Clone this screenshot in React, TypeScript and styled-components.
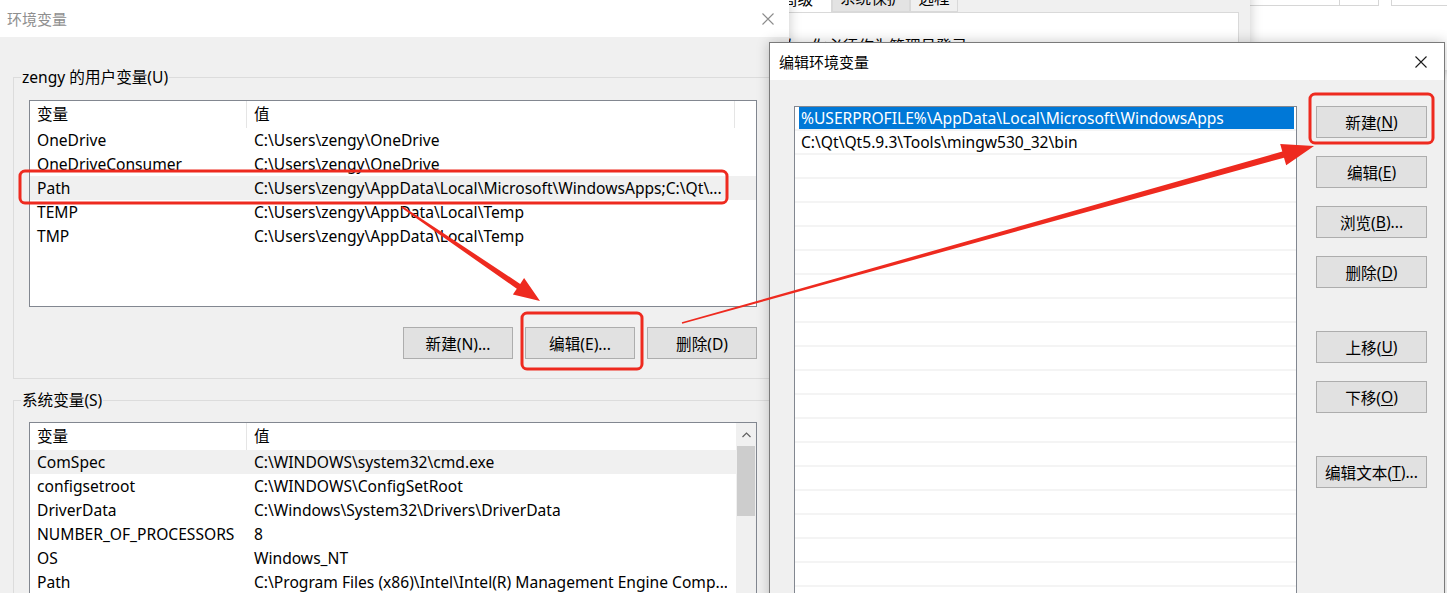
import React from 'react'
import styled, { createGlobalStyle } from 'styled-components'

const GlobalStyle = createGlobalStyle`
  html, body {
    margin: 0;
    padding: 0;
  }
  body {
    font-family: "Segoe UI", "Noto Sans", "Noto Sans CJK SC", sans-serif;
    font-size: 15.6px;
    color: #000;
    background: #fff;
    overflow: hidden;
  }
  * {
    box-sizing: border-box;
  }
`

const userVars = [
  ['OneDrive', 'C:\\Users\\zengy\\OneDrive'],
  ['OneDriveConsumer', 'C:\\Users\\zengy\\OneDrive'],
  ['Path', 'C:\\Users\\zengy\\AppData\\Local\\Microsoft\\WindowsApps;C:\\Qt\\...'],
  ['TEMP', 'C:\\Users\\zengy\\AppData\\Local\\Temp'],
  ['TMP', 'C:\\Users\\zengy\\AppData\\Local\\Temp'],
]

const sysVars = [
  ['ComSpec', 'C:\\WINDOWS\\system32\\cmd.exe'],
  ['configsetroot', 'C:\\WINDOWS\\ConfigSetRoot'],
  ['DriverData', 'C:\\Windows\\System32\\Drivers\\DriverData'],
  ['NUMBER_OF_PROCESSORS', '8'],
  ['OS', 'Windows_NT'],
  ['Path', 'C:\\Program Files (x86)\\Intel\\Intel(R) Management Engine Comp...'],
]

const pathEntries = [
  '%USERPROFILE%\\AppData\\Local\\Microsoft\\WindowsApps',
  'C:\\Qt\\Qt5.9.3\\Tools\\mingw530_32\\bin',
]

// thick tapered arrow, from (x1,y1) to tip (x2,y2)
const arrowPoints = (x1: number, y1: number, x2: number, y2: number, head: number, wing: number, w0: number, w1: number) => {
  const len = Math.hypot(x2 - x1, y2 - y1)
  const ux = (x2 - x1) / len
  const uy = (y2 - y1) / len
  const nx = -uy
  const ny = ux
  const bx = x2 - ux * head
  const by = y2 - uy * head
  const pts = [
    [x1 + nx * w0, y1 + ny * w0],
    [bx + nx * w1, by + ny * w1],
    [bx + nx * wing, by + ny * wing],
    [x2, y2],
    [bx - nx * wing, by - ny * wing],
    [bx - nx * w1, by - ny * w1],
    [x1 - nx * w0, y1 - ny * w0],
  ]
  return pts.map(p => p.map(v => v.toFixed(1)).join(',')).join(' ')
}

const CloseIcon = ({ color }: { color: string }) => (
  <svg width="12" height="12" viewBox="0 0 12 12">
    <path d="M0.5 0.5 L11.5 11.5 M11.5 0.5 L0.5 11.5" stroke={color} strokeWidth="1.1" fill="none" />
  </svg>
)

export default function App() {
  return (
    <>
      <GlobalStyle />
      <Desktop>
        <Window $left={1250} $top={-30} $width={260} $height={100} $z={1}>
          <TopCells>
            <TopCell $width={90} />
            <TopCell $width={39} />
            <TopGap />
            <TopCell $width={70} />
          </TopCells>
        </Window>

        <Window $left={560} $top={-12} $width={690} $height={300} $z={2} $bg="#f0f0f0">
          <Tabs>
            <Tab $active>高级</Tab>
            <Tab $shade="#e3e3e3">系统保护</Tab>
            <Tab $shade="#f0f0f0">远程</Tab>
          </Tabs>
          <TabPanel>要进行大多数更改，你必须作为管理员登录。</TabPanel>
        </Window>

        <Window $left={0} $top={0} $width={789} $height={640} $z={3} $bg="#f0f0f0">
          <TitleBar $height={37} $pad={7}>
            <TitleText $dim>环境变量</TitleText>
            <CloseBox $width={42}>
              <CloseIcon color="#8c8c8c" />
            </CloseBox>
          </TitleBar>
          <EnvBody>
            <Group $top={30}>
              <GroupLabel>zengy 的用户变量(U)</GroupLabel>
              <ListBox $height={207} $top={13}>
                <Table>
                  <HeaderRow>
                    <HeaderCell $width={217}>变量</HeaderCell>
                    <HeaderCell $width={488}>值</HeaderCell>
                    <HeaderCell $width={0} $last />
                  </HeaderRow>
                  {userVars.map(([k, v]) => (
                    <VarRow key={k} $selected={k === 'Path'}>
                      <VarCell $width={217}>{k}</VarCell>
                      <VarCell $width={480}>{v}</VarCell>
                    </VarRow>
                  ))}
                </Table>
              </ListBox>
              <ButtonRow>
                <Button $width={110}>新建(N)...</Button>
                <Button $width={110}>编辑(E)...</Button>
                <Button $width={110}>删除(D)</Button>
              </ButtonRow>
            </Group>
            <Group $top={11}>
              <GroupLabel>系统变量(S)</GroupLabel>
              <ListBox $height={300} $top={12}>
                <Table>
                  <HeaderRow>
                    <HeaderCell $width={217}>变量</HeaderCell>
                    <HeaderCell $width={488} $last>值</HeaderCell>
                  </HeaderRow>
                  {sysVars.map(([k, v]) => (
                    <VarRow key={k} $selected={k === 'ComSpec'}>
                      <VarCell $width={217}>{k}</VarCell>
                      <VarCell $width={480}>{v}</VarCell>
                    </VarRow>
                  ))}
                </Table>
                <ScrollBar>
                  <ScrollArrow>
                    <svg width="9" height="6" viewBox="0 0 9 6">
                      <path d="M0.5 5 L4.5 1 L8.5 5" stroke="#606060" strokeWidth="1.2" fill="none" />
                    </svg>
                  </ScrollArrow>
                  <ScrollThumb />
                </ScrollBar>
              </ListBox>
            </Group>
          </EnvBody>
        </Window>

        <Window $left={769} $top={42} $width={676} $height={580} $z={4} $bg="#f0f0f0" $framed>
          <TitleBar $height={37} $pad={9}>
            <TitleText>编辑环境变量</TitleText>
            <CloseBox $width={46}>
              <CloseIcon color="#1a1a1a" />
            </CloseBox>
          </TitleBar>
          <EditBody>
            <PathList>
              {Array.from({ length: 21 }).map((_, i) => (
                <PathRow key={i}>
                  {pathEntries[i] && <PathItem $selected={i === 0}>{pathEntries[i]}</PathItem>}
                </PathRow>
              ))}
            </PathList>
            <SideButtons>
              <Button $width={111}>新建(<u>N</u>)</Button>
              <Button $width={111}>编辑(<u>E</u>)</Button>
              <Button $width={111}>浏览(<u>B</u>)...</Button>
              <Button $width={111}>删除(<u>D</u>)</Button>
              <Button $width={111} $spaced>上移(<u>U</u>)</Button>
              <Button $width={111}>下移(<u>O</u>)</Button>
              <Button $width={111} $spaced>编辑文本(<u>T</u>)...</Button>
            </SideButtons>
          </EditBody>
        </Window>

        <Marks width="1447" height="593" viewBox="0 0 1447 593">
          <rect x="20" y="171" width="707" height="32" rx="5" fill="none" stroke="#ee2a1f" strokeWidth="3" />
          <rect x="522" y="313" width="120" height="56" rx="5" fill="none" stroke="#ee2a1f" strokeWidth="3" />
          <rect x="1310" y="94" width="123" height="49" rx="5" fill="none" stroke="#ee2a1f" strokeWidth="3" />
          <polygon points={arrowPoints(402, 207, 540, 301, 26, 10, 1, 3)} fill="#ee2a1f" />
          <polygon points={arrowPoints(682, 323, 1314, 146, 32, 11, 0.7, 3.2)} fill="#ee2a1f" />
        </Marks>
      </Desktop>
    </>
  )
}

const Desktop = styled.div`
  position: relative;
  width: 1447px;
  height: 593px;
  overflow: hidden;
  background: #fff;
`

const Window = styled.div<{ $left: number; $top: number; $width: number; $height: number; $z: number; $bg?: string; $framed?: boolean }>`
  position: absolute;
  left: ${p => p.$left}px;
  top: ${p => p.$top}px;
  width: ${p => p.$width}px;
  height: ${p => p.$height}px;
  z-index: ${p => p.$z};
  background: ${p => p.$bg ?? '#fff'};
  border: ${p => (p.$framed ? '1px solid #7a7a7a' : 'none')};
  box-shadow: 0 0 12px rgba(0, 0, 0, 0.22);
  display: flex;
  flex-direction: column;
`

const TopCells = styled.div`
  display: flex;
  height: 36px;
`

const TopCell = styled.div<{ $width: number }>`
  width: ${p => p.$width}px;
  border-right: 1px solid #d6d6d6;
  border-bottom: 1px solid #d6d6d6;
`

const TopGap = styled.div`
  width: 13px;
  border-right: 1px solid #d6d6d6;
`

const Tabs = styled.div`
  display: flex;
  height: 24px;
  padding-left: 210px;
`

const Tab = styled.div<{ $active?: boolean; $shade?: string }>`
  display: flex;
  align-items: flex-end;
  justify-content: center;
  padding: 0 7px 3px;
  background: ${p => (p.$active ? '#fff' : p.$shade)};
  border: 1px solid #d9d9d9;
  border-bottom: ${p => (p.$active ? 'none' : '1px solid #d9d9d9')};
  line-height: 20px;
  &:first-child {
    width: 62px;
    justify-content: flex-end;
    padding-right: 18px;
  }
`

const TabPanel = styled.div`
  flex: 1;
  margin: 0 11px 0 10px;
  background: #fff;
  border: 1px solid #d9d9d9;
  padding: 23px 0 0 100px;
  line-height: 20px;
`

const TitleBar = styled.div<{ $height: number; $pad: number }>`
  height: ${p => p.$height}px;
  flex-shrink: 0;
  display: flex;
  align-items: center;
  justify-content: space-between;
  padding-left: ${p => p.$pad}px;
  background: #fff;
`

const TitleText = styled.div<{ $dim?: boolean }>`
  color: ${p => (p.$dim ? '#8f8f8f' : '#000')};
  font-size: 15px;
  line-height: 20px;
`

const CloseBox = styled.div<{ $width: number }>`
  width: ${p => p.$width}px;
  height: 100%;
  display: flex;
  align-items: center;
  justify-content: center;
`

const EnvBody = styled.div`
  flex: 1;
  padding: 0 16px 0 13px;
  display: flex;
  flex-direction: column;
`

const Group = styled.fieldset<{ $top: number }>`
  margin: ${p => p.$top}px 0 0 0;
  padding: 0 15px 19px 15px;
  border: 1px solid #dcdcdc;
  min-width: 0;
`

const GroupLabel = styled.legend`
  margin-left: -8px;
  padding: 0 1px;
  line-height: 20px;
  height: 20px;
`

const ListBox = styled.div<{ $height: number; $top: number }>`
  height: ${p => p.$height}px;
  margin-top: ${p => p.$top}px;
  background: #fff;
  border: 1px solid #828790;
  display: flex;
  overflow: hidden;
`

const Table = styled.div`
  flex: 1;
  display: flex;
  flex-direction: column;
  min-width: 0;
`

const HeaderRow = styled.div`
  display: flex;
  height: 27px;
  flex-shrink: 0;
`

const HeaderCell = styled.div<{ $width: number; $last?: boolean }>`
  width: ${p => (p.$last ? 'auto' : `${p.$width}px`)};
  flex: ${p => (p.$last ? 1 : 'none')};
  padding-left: 7px;
  line-height: 27px;
  border-right: ${p => (p.$last ? 'none' : '1px solid #e5e5e5')};
`

const VarRow = styled.div<{ $selected?: boolean }>`
  display: flex;
  height: 24px;
  flex-shrink: 0;
  align-items: center;
  background: ${p => (p.$selected ? '#f0f0f0' : 'transparent')};
`

const VarCell = styled.div<{ $width: number }>`
  width: ${p => p.$width}px;
  flex-shrink: 0;
  padding-left: 7px;
  white-space: nowrap;
  overflow: hidden;
  line-height: 24px;
`

const ScrollBar = styled.div`
  width: 20px;
  flex-shrink: 0;
  background: #f0f0f0;
  display: flex;
  flex-direction: column;
`

const ScrollArrow = styled.div`
  height: 23px;
  display: flex;
  align-items: center;
  justify-content: center;
`

const ScrollThumb = styled.div`
  height: 70px;
  margin: 0 1px;
  background: #cdcdcd;
`

const ButtonRow = styled.div`
  display: flex;
  justify-content: flex-end;
  gap: 12px;
  margin-top: 20px;
`

const Button = styled.div<{ $width: number; $spaced?: boolean }>`
  width: ${p => p.$width}px;
  height: 32px;
  flex-shrink: 0;
  margin-top: ${p => (p.$spaced ? '25px' : '0')};
  display: flex;
  align-items: center;
  justify-content: center;
  background: #e1e1e1;
  border: 1px solid #adadad;
  color: #000;
  white-space: nowrap;
  u {
    text-underline-offset: 2px;
  }
`

const EditBody = styled.div`
  flex: 1;
  display: flex;
  align-items: flex-start;
  padding: 26px 0 0 24px;
  gap: 19px;
`

const PathList = styled.div`
  width: 503px;
  height: 520px;
  background: #fff;
  border: 1px solid #828790;
  overflow: hidden;
`

const PathRow = styled.div`
  height: 24px;
  border-bottom: 2px solid #f4f4f4;
  display: flex;
`

const PathItem = styled.div<{ $selected?: boolean }>`
  flex: 1;
  margin: 0 2px 0 4px;
  padding-left: 2px;
  line-height: 23px;
  background: ${p => (p.$selected ? '#0078d7' : 'transparent')};
  color: ${p => (p.$selected ? '#fff' : '#000')};
  white-space: nowrap;
`

const SideButtons = styled.div`
  display: flex;
  flex-direction: column;
  gap: 18px;
`

const Marks = styled.svg`
  position: absolute;
  left: 0;
  top: 0;
  z-index: 10;
  pointer-events: none;
`
